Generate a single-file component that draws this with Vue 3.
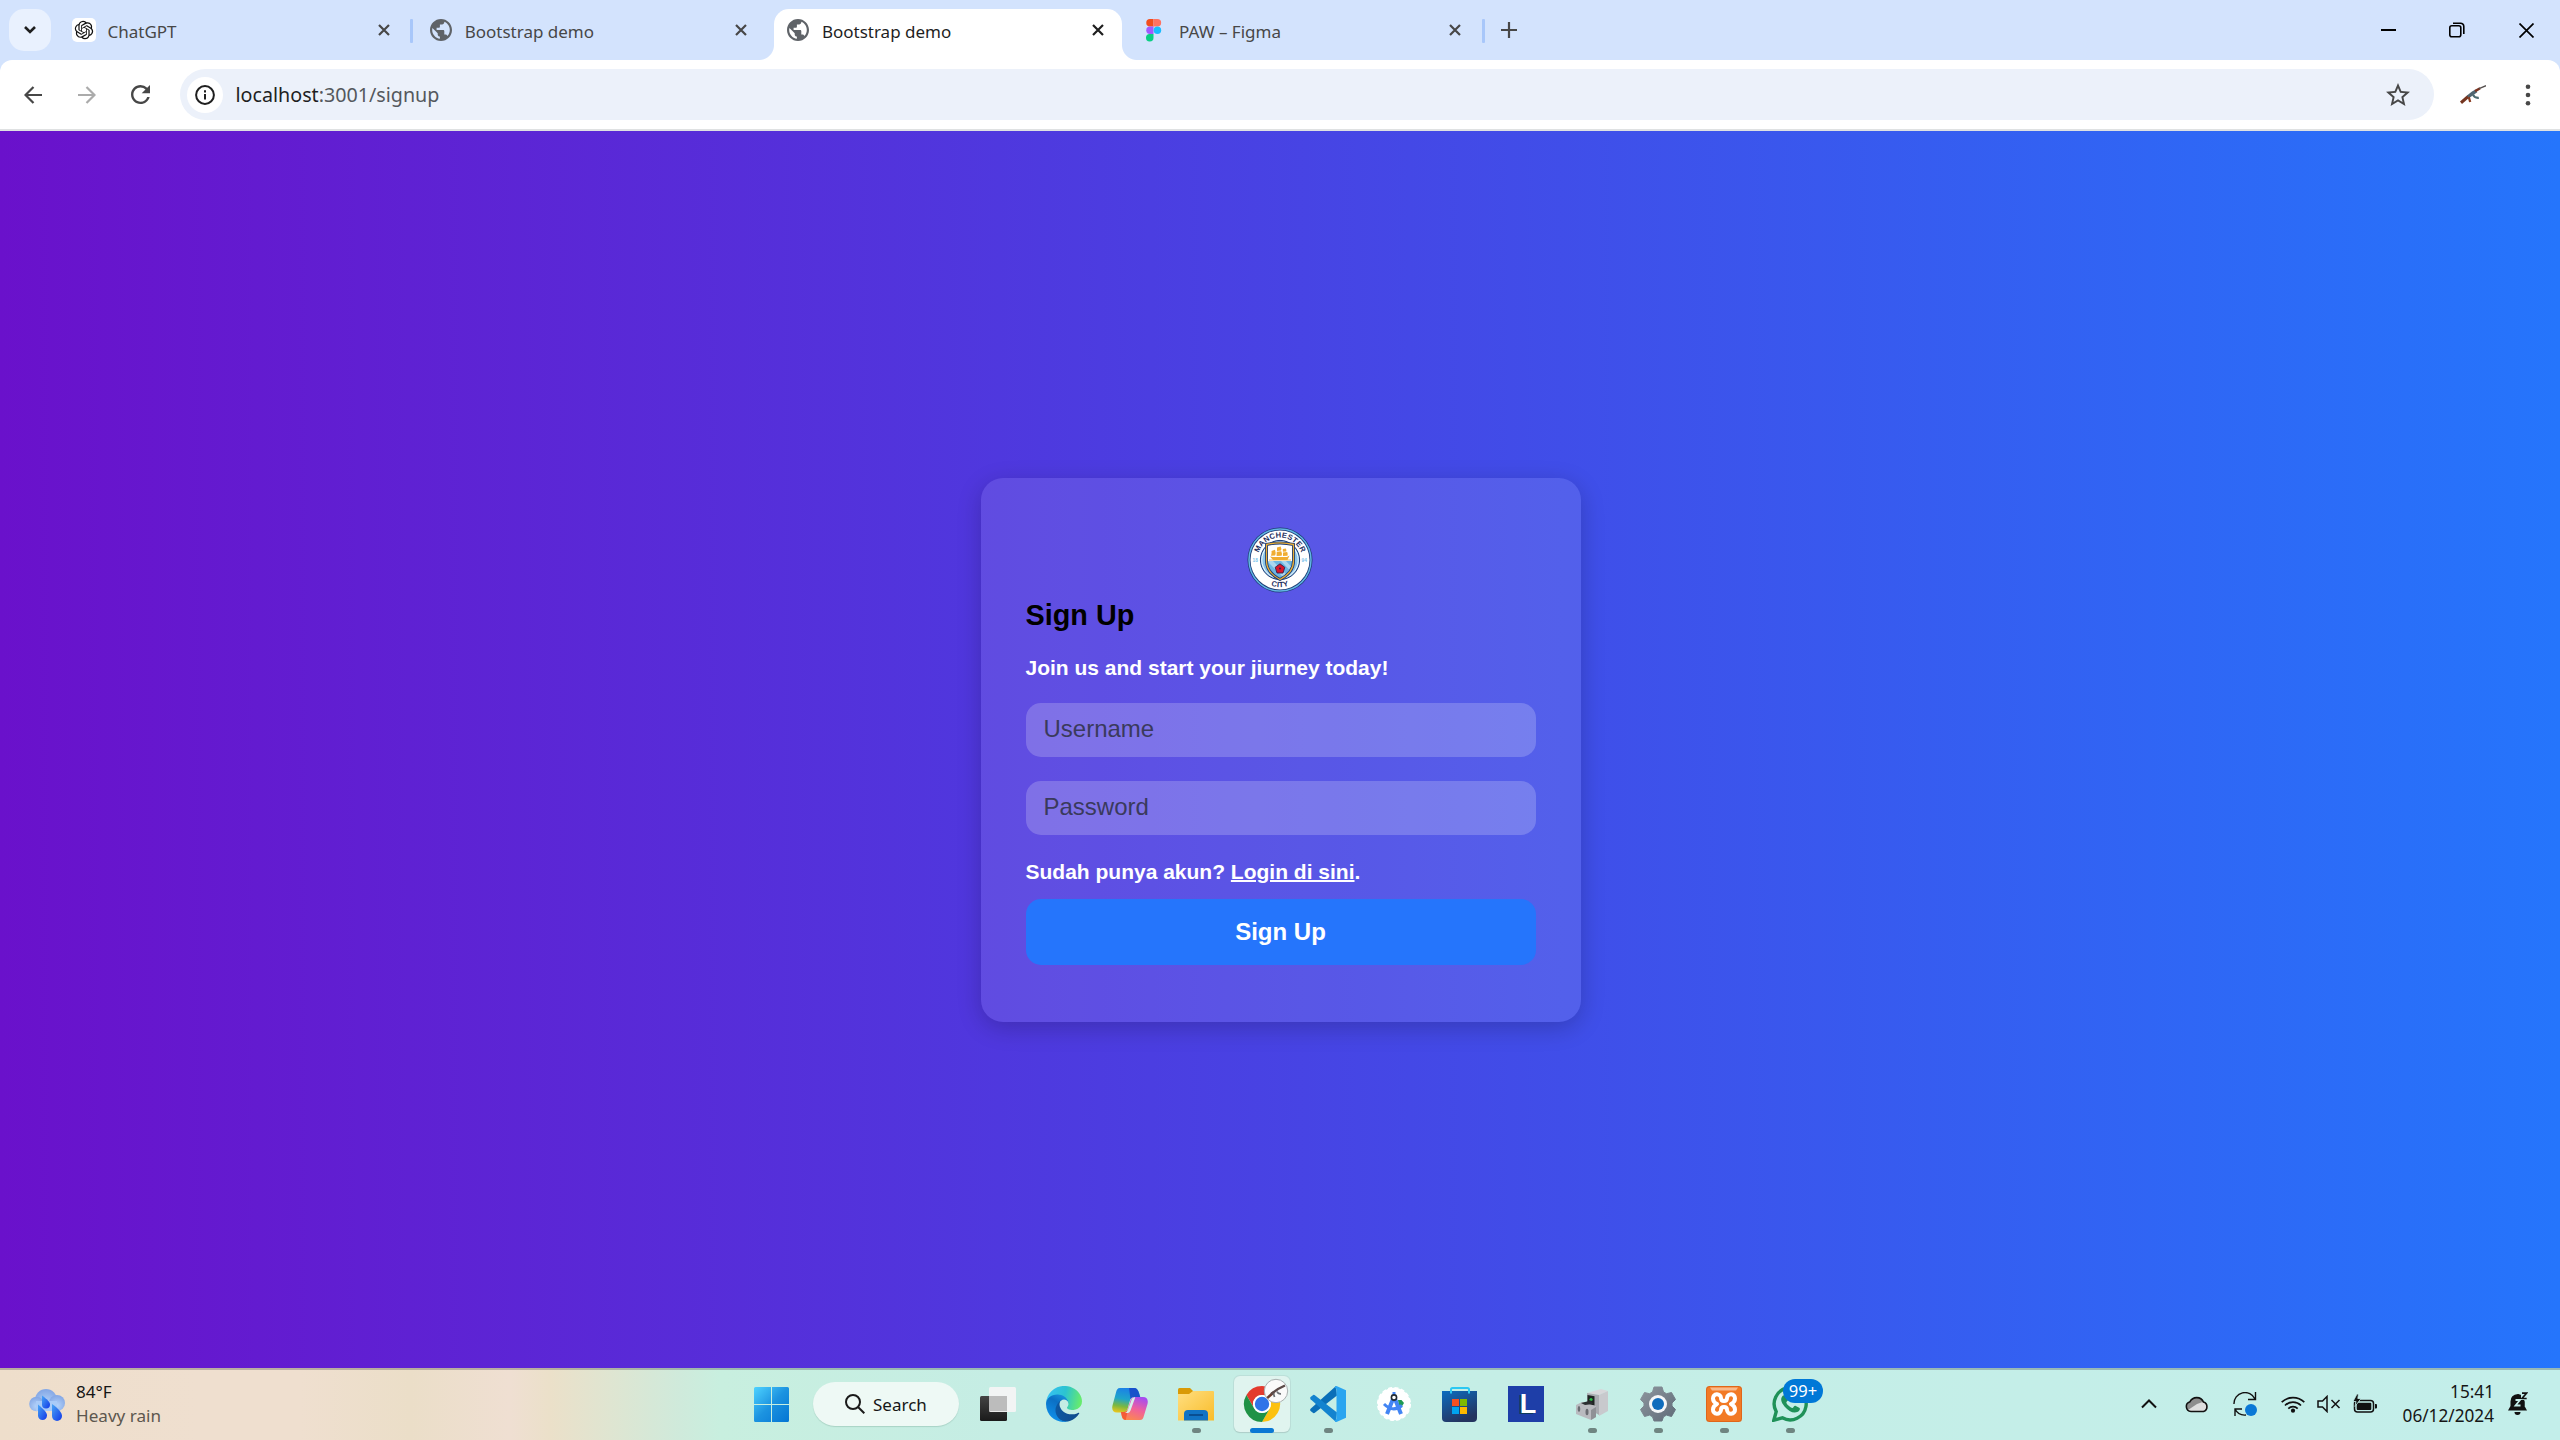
<script setup>
import { ref } from 'vue'

const tabs = [
  { title: 'ChatGPT', icon: 'gpt', sep: true },
  { title: 'Bootstrap demo', icon: 'globe' },
  { title: 'Bootstrap demo', icon: 'globe', active: true },
  { title: 'PAW – Figma', icon: 'figma', sep: true },
]
const apps = [
  { id: 'taskview' },
  { id: 'edge' },
  { id: 'copilot' },
  { id: 'folder', open: true },
  { id: 'chrome', current: true },
  { id: 'vscode', open: true },
  { id: 'studio' },
  { id: 'store' },
  { id: 'lapp' },
  { id: 'server', open: true },
  { id: 'settings', open: true },
  { id: 'xampp', open: true },
  { id: 'whatsapp', open: true },
]
const username = ref('')
const password = ref('')
</script>

<template>
  <div class="screen">
    <header class="strip">
      <button class="tabsearch">
        <svg width="14" height="10" viewBox="0 0 14 10"><path d="M2 2l5 5 5-5" fill="none" stroke="#1f1f1f" stroke-width="2.6" /></svg>
      </button>
      <div v-for="(t, i) in tabs" :key="i" class="tab" :class="{ active: t.active, sep: t.sep }">
        <div v-if="t.active" class="shape"></div>
        <span class="fav">
          <svg v-if="t.icon === 'gpt'" width="24" height="24" viewBox="0 0 24 24">
            <rect width="24" height="24" rx="5" fill="#fff" />
            <g transform="translate(2.8 2.8) scale(.767)"><path fill="#111" d="M22.2819 9.8211a5.9847 5.9847 0 0 0-.5157-4.9108 6.0462 6.0462 0 0 0-6.5098-2.9A6.0651 6.0651 0 0 0 4.9807 4.1818a5.9847 5.9847 0 0 0-3.9977 2.9 6.0462 6.0462 0 0 0 .7427 7.0966 5.98 5.98 0 0 0 .511 4.9107 6.051 6.051 0 0 0 6.5146 2.9001A5.9847 5.9847 0 0 0 13.2599 24a6.0557 6.0557 0 0 0 5.7718-4.2058 5.9894 5.9894 0 0 0 3.9977-2.9001 6.0557 6.0557 0 0 0-.7475-7.0729zm-9.022 12.6081a4.4755 4.4755 0 0 1-2.8764-1.0408l.1419-.0804 4.7783-2.7582a.7948.7948 0 0 0 .3927-.6813v-6.7369l2.02 1.1686a.071.071 0 0 1 .038.052v5.5826a4.504 4.504 0 0 1-4.4945 4.4944zm-9.6607-4.1254a4.4708 4.4708 0 0 1-.5346-3.0137l.142.0852 4.783 2.7582a.7712.7712 0 0 0 .7806 0l5.8428-3.3685v2.3324a.0804.0804 0 0 1-.0332.0615L9.74 19.9502a4.4992 4.4992 0 0 1-6.1408-1.6464zM2.3408 7.8956a4.485 4.485 0 0 1 2.3655-1.9728V11.6a.7664.7664 0 0 0 .3879.6765l5.8144 3.3543-2.0201 1.1685a.0757.0757 0 0 1-.071 0l-4.8303-2.7865A4.504 4.504 0 0 1 2.3408 7.872zm16.5963 3.8558L13.1038 8.364 15.1192 7.2a.0757.0757 0 0 1 .071 0l4.8303 2.7913a4.4944 4.4944 0 0 1-.6765 8.1042v-5.6772a.79.79 0 0 0-.407-.667zm2.0107-3.0231l-.142-.0852-4.7735-2.7818a.7759.7759 0 0 0-.7854 0L9.409 9.2297V6.8974a.0662.0662 0 0 1 .0284-.0615l4.8303-2.7866a4.4992 4.4992 0 0 1 6.6802 4.66zM8.3065 12.863l-2.02-1.1638a.0804.0804 0 0 1-.038-.0567V6.0742a4.4992 4.4992 0 0 1 7.3757-3.4537l-.142.0805L8.704 5.459a.7948.7948 0 0 0-.3927.6813zm1.0976-2.3654l2.602-1.4998 2.6069 1.4998v2.9994l-2.5974 1.4997-2.6067-1.4997Z" /></g>
          </svg>
          <svg v-else-if="t.icon === 'globe'" width="22" height="22" viewBox="2 2 20 20">
            <path fill="#5f6368" d="M12 2C6.48 2 2 6.48 2 12s4.48 10 10 10 10-4.48 10-10S17.52 2 12 2zm-1 17.93c-3.95-.49-7-3.85-7-7.93 0-.62.08-1.21.21-1.79L9 15v1c0 1.1.9 2 2 2v1.93zm6.9-2.54c-.26-.81-1-1.39-1.9-1.39h-1v-3c0-.55-.45-1-1-1H8v-2h2c.55 0 1-.45 1-1V7h2c1.1 0 2-.9 2-2v-.41c2.93 1.19 5 4.06 5 7.41 0 2.08-.8 3.97-2.1 5.39z" />
          </svg>
          <svg v-else width="24" height="24" viewBox="0 0 24 24">
            <path d="M9.5 1H6a3.75 3.75 0 0 0 0 7.5h3.5z" fill="#f24e1e" />
            <path d="M9.5 1H13.4a3.75 3.75 0 0 1 0 7.5H9.5z" fill="#ff7262" />
            <path d="M9.5 8.5H6A3.75 3.75 0 0 0 6 16h3.5z" fill="#a259ff" />
            <circle cx="13.4" cy="12.2" r="3.75" fill="#1abcfe" />
            <path d="M9.5 16H6a3.75 3.75 0 1 0 3.5 3.75z" fill="#0acf83" />
          </svg>
        </span>
        <span class="title">{{ t.title }}</span>
        <svg class="x" width="12" height="12" viewBox="0 0 12 12"><path d="M1 1l10 10M11 1L1 11" fill="none" stroke="currentColor" stroke-width="2.2" /></svg>
      </div>
      <svg class="plus" width="16" height="16" viewBox="0 0 16 16"><path d="M8 0v16M0 8h16" stroke="#474747" stroke-width="2.2" /></svg>
      <div class="wincontrols">
        <svg width="15" height="15" viewBox="0 0 15 15"><path d="M0 7h15" stroke="#000" stroke-width="2" /></svg>
        <svg width="16" height="16" viewBox="0 0 16 16" fill="none" stroke="#000" stroke-width="1.6"><rect x=".8" y="3.8" width="11" height="11" rx="2" /><path d="M4 1.2h7.5a3.2 3.2 0 0 1 3.3 3.3V12" /></svg>
        <svg width="15" height="15" viewBox="0 0 15 15"><path d="M.5.5l14 14M14.5.5l-14 14" stroke="#000" stroke-width="1.7" /></svg>
      </div>
    </header>

    <div class="toolwrap">
      <div class="toolbar">
        <svg class="back" width="18" height="18" viewBox="0 0 18 18"><path d="M18 9H1.5M9.5.9L1.5 9l8 8.1" fill="none" stroke="#474747" stroke-width="2.2" /></svg>
        <svg class="fwd" width="18" height="18" viewBox="0 0 18 18"><path d="M0 9h16.5M8.5.9l8 8.1-8 8.1" fill="none" stroke="#ababab" stroke-width="2.2" /></svg>
        <svg class="reload" width="19" height="19" viewBox="4 4 16 16"><path fill="#474747" d="M17.65 6.35A7.958 7.958 0 0 0 12 4c-4.42 0-7.99 3.58-7.99 8s3.57 8 7.99 8c3.73 0 6.84-2.55 7.73-6h-2.08A5.99 5.99 0 0 1 12 18c-3.31 0-6-2.69-6-6s2.69-6 6-6c1.66 0 3.14.69 4.22 1.78L13 11h7V4l-2.35 2.35z" /></svg>
        <div class="omnibox">
          <span class="info">
            <svg width="20" height="20" viewBox="0 0 20 20"><circle cx="10" cy="10" r="8.9" fill="none" stroke="#1f1f1f" stroke-width="2" /><path d="M10 9v5.5M10 5.3v2.2" stroke="#1f1f1f" stroke-width="2" /></svg>
          </span>
          <span class="url"><b>localhost</b>:3001/signup</span>
          <svg class="star" width="24" height="23" viewBox="2 2 20 19"><path fill="#474747" d="M22 9.24l-7.19-.62L12 2 9.19 8.63 2 9.24l5.46 4.73L5.82 21 12 17.27 18.18 21l-1.63-7.03L22 9.24zM12 15.4l-3.76 2.27 1-4.28-3.32-2.88 4.38-.38L12 6.1l1.71 4.04 4.38.38-3.32 2.88 1 4.28L12 15.4z" /></svg>
        </div>
        <svg class="avatar" width="26" height="20" viewBox="0 0 26 20">
          <path d="M0 16.5L7.5 10l2.2 2.2L2 19z" fill="#74341f" />
          <path d="M7 10.5l5-4 3.5-2 1.8 2.7-6 4.2-2.5 1.8z" fill="#4f6470" />
          <path d="M9.800 11.5l1.5 5.300-2.2.500-1.300-4.500z" fill="#8a3d22" />
          <path d="M13 9.5c1 3 3 3.500 5.8 3.300" fill="none" stroke="#4d6a70" stroke-width="2.200" />
          <path d="M14.500 5l5-2.700 1.200 1.900-5 3z" fill="#7a3320" />
          <path d="M19 3.600L26 .800" stroke="#56504f" stroke-width="1.500" />
        </svg>
        <svg class="menu" width="6" height="22" viewBox="0 0 6 22" fill="#474747"><circle cx="3" cy="2.8" r="2.3" /><circle cx="3" cy="11" r="2.3" /><circle cx="3" cy="19.2" r="2.3" /></svg>
      </div>
    </div>

    <main class="page">
      <form class="card" @submit.prevent>
        <svg class="crest" width="66" height="66" viewBox="0 0 66 66">
          <defs>
            <path id="arcTop" d="M10.6 33a22.4 22.4 0 0 1 44.8 0" />
            <path id="arcBot" d="M5.8 33a27.2 27.2 0 0 0 54.4 0" />
            <clipPath id="shield"><path d="M19.5 17.500q13.500-3.200 27 0v16.500q0 11.500-13.500 18.500Q19.500 45.500 19.500 34z" /></clipPath>
          </defs>
          <circle cx="33" cy="33" r="32.5" fill="#1c3a72" />
          <circle cx="33" cy="33" r="31" fill="none" stroke="#62b5e5" stroke-width="1.5" />
          <circle cx="33" cy="33" r="29.5" fill="#fff" />
          <circle cx="33" cy="33" r="19.6" fill="#8cc7ea" stroke="#1c3a72" stroke-width="1" />
          <circle cx="33" cy="33" r="18.200" fill="none" stroke="#fff" stroke-width=".9" />
          <g clip-path="url(#shield)">
            <path d="M18 14h30v20H18z" fill="#fff" />
            <path d="M18 34h30v20H18z" fill="#6cb6e2" />
            <path d="M20 34h6l17 17h-6zM34 34h5l10 11v5z" fill="#aad6f0" />
          </g>
          <path d="M19.5 17.500q13.500-3.200 27 0v16.500q0 11.500-13.500 18.500Q19.500 45.500 19.500 34z" fill="none" stroke="#1c3a72" stroke-width="3" />
          <path d="M19.5 17.500q13.500-3.200 27 0v16.500q0 11.500-13.500 18.500Q19.500 45.500 19.500 34z" fill="none" stroke="#e9ae35" stroke-width="1.3" />
          <path d="M23 29.500l3 .500h14l2.500-1.500-2 4.500H26zM24.500 24l3.500-1.300q1.200 3 .200 5.800l-4.200.300q1-2.400.500-4.800zM30 20.500l3.700-1q1 2 .300 4l-4 .500zM29.700 24.800l4.600-.500q1 2.300.300 4.500l-5 .200zM35.800 22l3-.500q1 1.500.400 3l-3.300.300zM36 25.500l4.200-.500q.900 2 .300 3.800l-4.500.200z" fill="#f0ad31" />
          <path d="M22 33h22" stroke="#f0ad31" stroke-width=".8" />
          <path d="M33 36.8l4.800 3.500-1.800 5.700h-6l-1.800-5.700z" fill="#d8152c" stroke="#33224a" stroke-width=".9" />
          <circle cx="33" cy="41.600" r="1" fill="#33224a" />
          <text class="crest-name"><textPath href="#arcTop" startOffset="50%" text-anchor="middle">MANCHESTER</textPath></text>
          <text class="crest-name"><textPath href="#arcBot" startOffset="50%" text-anchor="middle">CITY</textPath></text>
          <text class="crest-year" x="5.5" y="35">18</text>
          <text class="crest-year" x="54.5" y="35">94</text>
        </svg>
        <h2>Sign Up</h2>
        <p class="lead">Join us and start your jiurney today!</p>
        <input v-model="username" type="text" placeholder="Username" />
        <input v-model="password" type="password" placeholder="Password" />
        <p class="login">Sudah punya akun? <a>Login di sini</a>.</p>
        <button class="submit" type="submit">Sign Up</button>
      </form>
    </main>

    <footer class="taskbar">
      <div class="weather">
        <svg width="36" height="34" viewBox="0 0 36 34">
          <defs>
            <radialGradient id="cl" cx=".5" cy=".65" r=".6"><stop offset="0" stop-color="#b4d3fa" /><stop offset="1" stop-color="#86a9e6" /></radialGradient>
            <linearGradient id="dr" x1="0" y1="0" x2="1" y2="1"><stop offset="0" stop-color="#48a5f5" /><stop offset="1" stop-color="#1238e8" /></linearGradient>
          </defs>
          <circle cx="17" cy="12" r="11" fill="url(#cl)" />
          <circle cx="7.5" cy="16" r="7.3" fill="url(#cl)" />
          <circle cx="28" cy="15" r="8" fill="url(#cl)" />
          <path d="M7 13h21v10H7z" fill="#a9cbf8" />
          <path d="M13 7.5c5 3.8 8 6.5 8 9a4 4 0 0 1-8 0z" fill="url(#dr)" />
          <path d="M9 16.5c6 5 9 8 9 11a4.5 4.5 0 0 1-9 0z" fill="url(#dr)" />
          <path d="M23 16c7 5 10 9 10 12a5 5 0 0 1-10 0z" fill="url(#dr)" />
        </svg>
        <div class="wtext"><div class="deg">84°F</div><div class="desc">Heavy rain</div></div>
      </div>

      <svg class="start" width="35" height="35" viewBox="0 0 35 35">
        <defs><linearGradient id="win" x1="0" y1="0" x2="1" y2="1"><stop offset="0" stop-color="#4fd3ff" /><stop offset=".5" stop-color="#1c93e0" /><stop offset="1" stop-color="#0475d3" /></linearGradient></defs>
        <path d="M1.5 0H17v17H0V1.5A1.5 1.5 0 0 1 1.5 0zM18 0h15.5A1.5 1.5 0 0 1 35 1.5V17H18zM0 18h17v17H1.5A1.5 1.5 0 0 1 0 33.5zM18 18h17v15.5a1.5 1.5 0 0 1-1.5 1.5H18z" fill="url(#win)" />
      </svg>
      <div class="search">
        <svg width="20" height="20" viewBox="0 0 20 20"><circle cx="8" cy="8" r="7" fill="none" stroke="#1a1a1a" stroke-width="2" /><path d="M13 13l6.3 6.3" stroke="#1a1a1a" stroke-width="2" /></svg>
        <span>Search</span>
      </div>

      <div class="apps">
        <div v-for="a in apps" :key="a.id" class="app" :class="{ open: a.open, current: a.current }">
          <svg v-if="a.id === 'taskview'" width="36" height="36" viewBox="0 0 36 36">
            <defs><linearGradient id="tv" x1="0" y1="0" x2="0" y2="1"><stop offset="0" stop-color="#444" /><stop offset="1" stop-color="#1a1a1a" /></linearGradient></defs>
            <rect x="0" y="10" width="27" height="25" rx="1.5" fill="url(#tv)" />
            <rect x="9" y="1" width="27" height="25" rx="1.5" fill="#f4f4f4" fill-opacity=".95" />
            <path d="M9 10h18v15H9z" fill="#bcbcbc" />
          </svg>
          <svg v-else-if="a.id === 'edge'" width="36" height="36" viewBox="4.6 5 256 256">
            <defs>
              <linearGradient id="e1" x1="60" y1="0" x2="240" y2="0" gradientUnits="userSpaceOnUse"><stop offset="0" stop-color="#0c59a4" /><stop offset="1" stop-color="#114a8b" /></linearGradient>
              <linearGradient id="e2" x1="150" y1="60" x2="50" y2="240" gradientUnits="userSpaceOnUse"><stop offset="0" stop-color="#1b9de2" /><stop offset=".4" stop-color="#0b6fc4" /><stop offset="1" stop-color="#0f8fe8" /></linearGradient>
              <linearGradient id="e3" x1="20" y1="60" x2="250" y2="110" gradientUnits="userSpaceOnUse"><stop offset="0" stop-color="#35c1f1" /><stop offset=".5" stop-color="#2cc3d0" /><stop offset="1" stop-color="#66eb6e" /></linearGradient>
            </defs>
            <path fill="url(#e1)" d="M235.7 195.5a93.7 93.7 0 0 1-10.6 4.7 101.9 101.9 0 0 1-35.9 6.4c-47.3 0-88.5-32.5-88.5-74.3a31.5 31.5 0 0 1 16.4-27.3c-42.8 1.8-53.8 46.4-53.8 72.5 0 73.9 68.1 81.4 82.8 81.4 7.9 0 19.8-2.3 27-4.6l1.3-.4a128.3 128.3 0 0 0 66.6-52.8 4 4 0 0 0-5.3-5.6z" />
            <path fill="url(#e2)" d="M110.3 246.3A79.2 79.2 0 0 1 87.6 225a80.7 80.7 0 0 1 29.5-120c3.2-1.5 8.5-4.1 15.6-4a32.4 32.4 0 0 1 25.7 13 31.9 31.9 0 0 1 6.3 18.7c0-.2 24.5-79.6-80-79.6-43.9 0-80 41.7-80 78.2a130.2 130.2 0 0 0 12.1 56 128 128 0 0 0 156.4 67 75.5 75.5 0 0 1-62.8-8z" />
            <path fill="url(#e3)" d="M156.9 153.8c-.9 1-3.4 2.5-3.4 5.6 0 2.6 1.7 5.2 4.8 7.3 14.3 10 41.4 8.6 41.5 8.6a59.6 59.6 0 0 0 30.3-8.3 61.4 61.4 0 0 0 30.4-52.9c.3-22.4-8-37.3-11.3-43.9C228 28.8 182.3 4.6 132.6 4.6a128 128 0 0 0-128 126.2c.5-36.5 36.8-66 80-66 3.5 0 23.5.3 42 10a72.6 72.6 0 0 1 30.9 29.3c6.1 10.6 7.2 24.1 7.2 29.5s-2.7 13.3-7.8 19.9z" />
          </svg>
          <svg v-else-if="a.id === 'copilot'" width="36" height="34" viewBox="0 0 36 34">
            <defs>
              <linearGradient id="c1" x1=".5" y1="0" x2=".3" y2="1"><stop offset="0" stop-color="#1b7fe8" /><stop offset=".45" stop-color="#1fa5c9" /><stop offset=".75" stop-color="#7cb83f" /><stop offset="1" stop-color="#e5c51f" /></linearGradient>
              <linearGradient id="c2" x1=".7" y1="0" x2=".3" y2="1"><stop offset="0" stop-color="#a64df0" /><stop offset=".5" stop-color="#f0609c" /><stop offset="1" stop-color="#fb8a4d" /></linearGradient>
            </defs>
            <path d="M8 1h14c3 0 4 2 5 5l1.2 4H22c-2.5 0-3.5 1.5-4.2 4l-2.3 8c-.8 2.5-2 3.5-4.5 3.5H5c-4 0-5.5-3-4.5-7L4 5.5C4.8 2.5 5.500 1 8 1z" fill="url(#c1)" />
            <path d="M17 1h5c3 0 4 2 5 5l1.2 4H22c-1.8 0-3 1-3.5 2.5z" fill="#1748c7" opacity=".85" />
            <path d="M28 33H14c-3 0-4-2-4.5-5L9 25h3c2.5 0 3.5-1.5 4.2-4l2.3-7.5c.8-2.5 2-3.5 4.5-3.5h8c4 0 5.5 3 4.5 7L32 28.5c-.8 3-1.5 4.5-4 4.5z" fill="url(#c2)" />
            <path d="M9 25h3c2 0 3.2-1.2 4-3l-2.2 11C11 33 9.8 30 9 25z" fill="#f2542d" opacity=".8" />
            <path d="M20 11.500l3-1.500h-1c2-.200 1 1 .500 2.500l-4 11q-.800 2-2.500 2.500h-3q2-.500 3-3.500z" fill="#d4f0ea" />
          </svg>
          <svg v-else-if="a.id === 'folder'" width="36" height="36" viewBox="0 0 36 36">
            <defs><linearGradient id="fo" x1="0" y1="0" x2="1" y2="1"><stop offset="0" stop-color="#ffdf82" /><stop offset="1" stop-color="#f9bc29" /></linearGradient></defs>
            <path d="M0 3.5Q0 2 1.5 2H12l3.5 3.5L12 10H0z" fill="#d99a06" />
            <path d="M0 8h11l4-3h20q1 0 1 1v28.5H0z" fill="url(#fo)" />
            <path d="M6 34.5V28a4 4 0 0 1 4-4h16a4 4 0 0 1 4 4v6.5z" fill="#1173c4" />
            <path d="M11 29h14" stroke="#0a4a8c" stroke-width="1.8" />
          </svg>
          <svg v-else-if="a.id === 'chrome'" width="36" height="36" viewBox="0 0 36 36" overflow="visible">
            <path d="M2.4 9A18 18 0 0 1 33.6 9H18a9 9 0 0 0-7.8 13.5z" fill="#e33b2e" />
            <path d="M33.6 9A18 18 0 0 1 18 36l7.8-13.5A9 9 0 0 0 18 9z" fill="#fcc10f" />
            <path d="M2.4 9l7.8 13.5a9 9 0 0 0 15.6 0L18 36A18 18 0 0 1 2.4 9z" fill="#1f9246" />
            <circle cx="18" cy="18" r="9" fill="#fff" /><circle cx="18" cy="18" r="7.2" fill="#2f74e8" />
            <circle cx="32" cy="5" r="11.7" fill="#fafafa" stroke="#a9b0b0" stroke-width="1" />
            <path d="M22.5 11l6-5.5 2.5 1.5-7 6z" fill="#6b3d2e" />
            <path d="M27 8l7-5 7-3.5" fill="none" stroke="#5b4a48" stroke-width="2.2" />
            <path d="M29.5 7.5l1 3.5M33 5.5q1 2.5 4 2.3" fill="none" stroke="#6b6f73" stroke-width="1.7" />
          </svg>
          <svg v-else-if="a.id === 'vscode'" width="36" height="36" viewBox="0 0 36 36">
            <path d="M26 0l1 9.5L4.5 27l-1 .3L.6 25Q-.3 24 .6 22.8z" fill="#0a6fb8" />
            <path d="M26 36l1-9.5L4.5 9l-1-.3L.6 11Q-.3 12 .6 13.2z" fill="#1383cf" />
            <path d="M26.5 0L36 4.2v27.6L26.5 36Q25 36 24.500 34.5L26.5 33V3l-2-1.5Q25 0 26.5 0z" fill="#2aa5f0" />
          </svg>
          <svg v-else-if="a.id === 'studio'" width="36" height="36" viewBox="0 0 36 36">
            <circle cx="18" cy="18" r="16.3" fill="#fff" stroke="#fff" stroke-width="1.5" stroke-dasharray="4 2.4" />
            <path d="M22 14h3.500l2.5 3-2.5 4H23z" fill="#1f9a54" />
            <path d="M17 13l-6 15M19 13l6 15" stroke="#4285f4" stroke-width="4" />
            <path d="M8 18q9 9 18 1.5" fill="none" stroke="#4285f4" stroke-width="3" />
            <path d="M18 6v5" stroke="#4285f4" stroke-width="3" />
            <circle cx="18" cy="11.5" r="2.6" fill="#fff" stroke="#222b33" stroke-width="1.6" />
          </svg>
          <svg v-else-if="a.id === 'store'" width="36" height="36" viewBox="0 0 36 36">
            <defs><linearGradient id="st" x1="0" y1="0" x2=".5" y2="1"><stop offset="0" stop-color="#0c6cc0" /><stop offset="1" stop-color="#24345f" /></linearGradient></defs>
            <path d="M0 5h35v27a4 4 0 0 1-4 4H4a4 4 0 0 1-4-4z" fill="url(#st)" />
            <path d="M9 7.5V3.5Q9 2 10.5 2h15Q27 2 27 3.5v4" fill="none" stroke="#2cc8f2" stroke-width="2" />
            <path d="M10 13h7v7h-7z" fill="#f25022" /><path d="M18 13h7v7h-7z" fill="#7fba00" /><path d="M10 21h7v7h-7z" fill="#00a4ef" /><path d="M18 21h7v7h-7z" fill="#ffb900" />
          </svg>
          <span v-else-if="a.id === 'lapp'" class="lapp">L</span>
          <svg v-else-if="a.id === 'server'" width="36" height="36" viewBox="0 0 36 36">
            <path d="M13 7l14-4 7 2-9 4z" fill="#d7d7da" /><path d="M13 7l12 2v20l-12-7z" fill="#a9abb0" /><path d="M25 9l9-4v20l-9 5z" fill="#c8c9cd" />
            <path d="M13.5 9l7 1.2v9.5l-7-1.5z" fill="#1e2422" /><circle cx="17" cy="13.5" r="1.6" fill="#2fc04a" />
            <path d="M2 19l6-3 14 4v11l-5 3-15-6z" fill="#b9babf" /><path d="M17 24l5-3v10l-5 3z" fill="#8f9196" />
            <path d="M7 17l10-2.5 2 3.5-8 1z" fill="#2b2e30" /><ellipse cx="5" cy="23" rx="1.3" ry="3" fill="#6a6c72" /><ellipse cx="13" cy="26" rx="1.5" ry="3.2" fill="#6a6c72" />
          </svg>
          <svg v-else-if="a.id === 'settings'" width="36" height="36" viewBox="0 0 36 36">
            <defs><linearGradient id="ge" x1="0" y1="0" x2="1" y2="1"><stop offset="0" stop-color="#8e969e" /><stop offset="1" stop-color="#5f6b78" /></linearGradient></defs>
            <path d="M14 1h8l1.5 5 3 1.7 5-1.2 4 7L32 17v3l3.500 3.500-4 7-5-1.4-3 1.7-1.5 4.2h-8l-1.5-4.2-3-1.700-5 1.400-4-7L4 20v-3L.5 13.5l4-7 5 1.200 3-1.700z" fill="url(#ge)" stroke="url(#ge)" stroke-linejoin="round" />
            <circle cx="18" cy="18" r="9" fill="#f4f6f8" /><circle cx="18" cy="18" r="6" fill="#0f6cbd" />
          </svg>
          <svg v-else-if="a.id === 'xampp'" width="36" height="36" viewBox="0 0 36 36">
            <rect width="36" height="36" rx="3.5" fill="#e0661a" /><rect x="1" y="1" width="34" height="34" rx="3" fill="#f27a25" /><path d="M4 1.5h28l-2 3H6z" fill="#f9b98b" />
            <path d="M11 18q-4-2-4-5.500a4 4 0 0 1 8-.5q0 3 3 3t3-3a4 4 0 0 1 8 .5q0 3.500-4 5.500 4 2 4 5.500a4 4 0 0 1-8 .5q0-3-3-3t-3 3a4 4 0 0 1-8-.5Q7 20 11 18z" fill="none" stroke="#fff" stroke-width="4" stroke-linejoin="round" />
          </svg>
          <svg v-else width="36" height="36" viewBox="0 0 36 36">
            <path d="M1.8 34.2l2.4-8.600a16 16 0 1 1 6.2 6.200z" fill="none" stroke="#1f9158" stroke-width="3.4" />
            <path d="M12.7 9.300c-.7-.3-1.5-.1-2 .5-2.700 3-1.600 6.500 1.800 10.600 4.200 4.900 8.800 7.300 12.800 5.700 2.200-1 3.200-3.200 2.300-4.200l-4.200-2.200c-1.400-.3-1.900 2.200-3.100 2.200-1.900-.3-5.600-3.300-6-5.400.2-1.300 2-1.700 1.700-3.100z" fill="#1f9158" />
          </svg>
          <span v-if="a.id === 'whatsapp'" class="badge">99+</span>
        </div>
      </div>

      <div class="tray">
        <svg width="16" height="10" viewBox="0 0 16 10"><path d="M1 8.5l7-7 7 7" fill="none" stroke="#111" stroke-width="2" /></svg>
        <svg class="g28" width="24" height="17" viewBox="0 0 24 17">
          <path d="M6 15.5a5 5 0 0 1-1-9.800A7.500 7.500 0 0 1 18.5 6a5 5 0 0 1 0 9.500z" fill="#8d8d8d" />
          <path d="M3 14l9-6 5-1.800 4 .8 2 4-1.500 4-3 .5H6z" fill="#dedede" />
          <path d="M6 15.5a5 5 0 0 1-1-9.800A7.500 7.500 0 0 1 18.5 6a5 5 0 0 1 0 9.500z" fill="none" stroke="#111" stroke-width="1.6" />
        </svg>
        <svg class="g24" width="24" height="24" viewBox="0 0 24 24"><path d="M1 12A11 11 0 0 1 22 7M22.5 0v7.500H15M2 24v-7h7M2 17a11 11 0 0 0 11 6" fill="none" stroke="#111" stroke-width="1.4" /><circle cx="18" cy="18" r="6" fill="#0a78d6" /></svg>
        <svg class="g24" width="24" height="18" viewBox="0 0 24 18"><g fill="none" stroke="#111" stroke-width="1.7"><path d="M.7 7.200a16 16 0 0 1 22.600 0M4 10.500a11.300 11.300 0 0 1 16 0M7.300 13.600a6.700 6.700 0 0 1 9.400 0" /></g><circle cx="12" cy="15.7" r="2.1" fill="#111" /></svg>
        <svg class="g12" width="24" height="18" viewBox="0 0 24 18"><path d="M1 6h4.500L10 1.500v15L5.500 12H1zM14.500 5l8 8M22.500 5l-8 8" fill="none" stroke="#111" stroke-width="1.5" /></svg>
        <svg class="g12" width="24" height="20" viewBox="0 0 24 20"><rect x="1.500" y="6.500" width="19" height="11.500" rx="3" fill="none" stroke="#111" stroke-width="1.500" /><rect x="3.700" y="8.700" width="14.600" height="7.200" rx="1" fill="#111" /><path d="M22 10h1q1 0 1 1v2.500q0 1-1 1h-1z" fill="#111" /><path d="M4 0L0 7.500h3L2 12.500l6-8H4.800L5.500 0z" fill="#111" stroke="#c3edea" stroke-width=".8" /></svg>
        <div class="clock"><div>15:41</div><div>06/12/2024</div></div>
        <svg class="g14" width="20" height="24" viewBox="0 0 20 24">
          <path d="M10 2q-7.500.5-7.500 7.500V14L0 18.500h19L16.500 14V9.500z" fill="#111" /><path d="M10 2q6 .5 6.500 8v4H9z" fill="#111" /><path d="M6.500 20h6a3 3 0 0 1-6 0z" fill="#111" />
          <path d="M13-1h8v9h-8z" fill="#c3edea" /><path d="M14 1.200h4.500L14 6.500h4.700" fill="none" stroke="#111" stroke-width="1.700" />
          <path d="M7.500 8h4.500L7.500 13.500h5" fill="none" stroke="#c3edea" stroke-width="1.800" />
        </svg>
      </div>
    </footer>
  </div>
</template>

<style>
body { overflow: hidden; }
</style>

<style scoped>
.screen { width: 2560px; height: 1440px; display: flex; flex-direction: column; overflow: hidden; background: #d3e3fd; font-family: "Noto Sans", "Open Sans", sans-serif; }
.screen * { box-sizing: border-box; }
svg { display: block; flex: none; }
button { border: 0; padding: 0; }

.strip { height: 60px; display: flex; align-items: center; padding-left: 9px; }
.tabsearch { width: 42px; height: 42px; border-radius: 15px; background: #e9f1fe; display: flex; align-items: center; justify-content: center; margin-right: 6px; flex: none; }
.tab { position: relative; width: 357.2px; height: 60px; flex: none; display: flex; align-items: center; padding-left: 15px; color: #474747; font-size: 17px; }
.tab.active { color: #1f1f1f; }
.tab.sep::after { content: ""; position: absolute; right: 1px; top: 19px; width: 3px; height: 24px; border-radius: 1px; background: #a8c7fa; }
.shape { position: absolute; left: 2.6px; top: 9px; width: 348px; height: 51px; background: #fff; border-radius: 15px 15px 0 0; }
.shape::before, .shape::after { content: ""; position: absolute; bottom: 0; width: 15px; height: 15px; }
.shape::before { left: -15px; background: radial-gradient(circle at 0 0, transparent 14.5px, #fff 15.5px); }
.shape::after { right: -15px; background: radial-gradient(circle at 100% 0, transparent 14.5px, #fff 15.5px); }
.fav { position: relative; width: 24px; height: 24px; display: flex; align-items: center; justify-content: center; flex: none; }
.title { position: relative; margin-left: 11.5px; padding-top: 3px; line-height: 24px; width: 270px; white-space: nowrap; }
.x { position: relative; }
.plus { margin-left: 15px; }
.wincontrols { margin-left: auto; margin-right: 26px; display: flex; align-items: center; gap: 53px; }
.wincontrols svg:last-child { margin-left: 1px; }

.toolwrap { height: 71px; flex: none; }
.toolbar { height: 71px; background: #fff; border-radius: 12px 12px 0 0; border-bottom: 2px solid #dfe1e2; display: flex; align-items: center; padding-left: 24px; }
.fwd { margin-left: 36px; }
.reload { margin-left: 35px; }
.omnibox { margin-left: 30px; width: 2254px; height: 51px; border-radius: 26px; background: #ecf1fa; display: flex; align-items: center; padding: 0 24px 0 7px; }
.info { width: 36px; height: 36px; border-radius: 50%; background: #fff; display: flex; align-items: center; justify-content: center; }
.url { margin-left: 12.5px; font-size: 19.7px; line-height: 36px; color: #54585d; flex: 1; }
.url b { font-weight: 400; color: #1f1f1f; }
.avatar { margin-left: 26px; }
.menu { margin-left: 39px; }

.page { flex: 1; display: flex; align-items: center; justify-content: center; background: linear-gradient(to right, #6a11cb, #2575fc); font-family: "Liberation Sans", Arial, sans-serif; padding-left: 1px; }
.card { width: 600px; height: 544px; border-radius: 22px; padding: 50px 45px 0; background: rgba(255, 255, 255, .1); box-shadow: 0 6px 24px rgba(0, 0, 0, .2); display: flex; flex-direction: column; }
.crest { align-self: center; margin: -1px 0 4px -1px; }
.crest-name { font: 700 7.6px "Liberation Sans", Arial, sans-serif; fill: #1c2c5b; letter-spacing: .2px; }
.crest-year { font: 700 4.8px "Liberation Sans", Arial, sans-serif; fill: #7cc3ea; }
h2 { margin: 0; font-size: 28.8px; line-height: 36px; color: #000; }
.lead, .login { margin: 20px 0; font-size: 21px; line-height: 30px; font-weight: 700; color: #fff; }
input { height: 54px; flex: none; width: 100%; margin: 0 0 24px; border: 0; border-radius: 15px; padding: 0 18px 1px; background: rgba(255, 255, 255, .2); font: 24px "Liberation Sans", Arial, sans-serif; color: #fff; }
input::placeholder { color: #3a3a5c; opacity: 1; }
.login { margin: -2px 0 12px; }
.login a { text-decoration: underline; text-decoration-thickness: 2px; }
.submit { height: 66px; border-radius: 15px; background: #2575fc; color: #fff; font: 700 24px "Liberation Sans", Arial, sans-serif; }

.taskbar { height: 72px; flex: none; border-top: 2px solid rgba(0, 0, 0, .22); background: linear-gradient(to right, #eedecb 0, #efdfcf 200px, #efdfcf 300px, #ebdec8 410px, #efdfd2 510px, #ebe0c9 550px, #dfe5d1 610px, #cfeadb 680px, #c8efdf 720px, #c5ede4 1000px, #c5eee6 1500px, #c3eeea 2560px) border-box; display: flex; align-items: center; color: #161616; padding-bottom: 2px; }
.weather { width: 754px; padding-left: 29px; display: flex; align-items: center; flex: none; }
.weather svg { margin-top: 2px; }
.wtext { margin-left: 11px; font-size: 17.1px; line-height: 24px; }
.desc { color: #5d574f; }
.search { margin-left: 24px; width: 146px; height: 44px; border-radius: 22px; background: #eef9f5; box-shadow: 0 1px 1px rgba(0, 60, 40, .15); display: flex; align-items: center; padding-left: 32px; flex: none; }
.search span { margin-left: 8px; padding-top: 1px; font-size: 17px; line-height: 24px; }
.apps { margin-left: 6px; display: flex; }
.app { position: relative; width: 66px; height: 68px; display: flex; align-items: center; justify-content: center; }
.app svg { position: relative; }
.app.open::after { content: ""; position: absolute; left: 28.5px; top: 58px; width: 9px; height: 5px; border-radius: 2.5px; background: #6f8581; }
.app.current::before { content: ""; position: absolute; left: 5px; top: 6px; width: 56px; height: 56px; border-radius: 6px; background: #e0f4ef; box-shadow: 0 0 0 1px rgba(180, 210, 205, .5), 0 1px 1px rgba(0, 0, 0, .15); }
.app.current::after { content: ""; position: absolute; left: 21px; top: 58px; width: 24px; height: 5px; border-radius: 2.5px; background: #0a78d4; }
.lapp { width: 36px; height: 36px; background: #1e3ea8; color: #fff; font: 700 27px/36px "Liberation Sans", Arial, sans-serif; text-align: center; text-shadow: -2px 1px 0 #0f3a5a; padding-left: 4px; }
.badge { position: absolute; left: 26px; top: 9px; width: 40px; height: 24px; border-radius: 12px; background: #0078d7; color: #fff; font-size: 16.5px; line-height: 24px; text-align: center; }
.tray { margin-left: auto; padding-right: 32px; display: flex; align-items: center; }
.g28 { margin-left: 28px; }
.g24 { margin-left: 24px; }
.g12 { margin-left: 12px; }
.g14 { margin-left: 14px; }
.clock { width: 117px; text-align: right; font-size: 17.2px; line-height: 24px; }
</style>
